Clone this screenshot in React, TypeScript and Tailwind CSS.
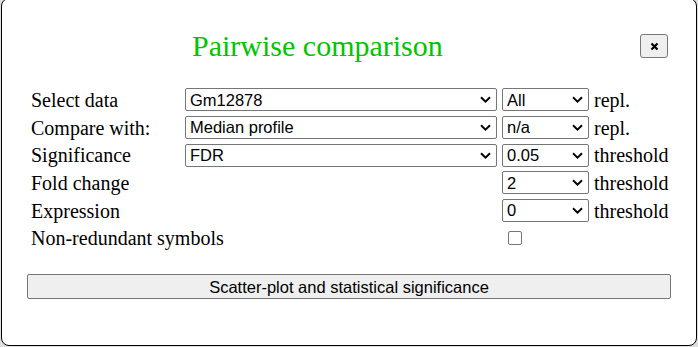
import React from "react";

function Chevron() {
  return (
    <svg width="11" height="7" viewBox="0 0 11 7" className="shrink-0">
      <path d="M1 1.2 L5.5 5.6 L10 1.2" fill="none" stroke="#000" strokeWidth="1.9" />
    </svg>
  );
}

function FakeSelect({ value, wide }: { value: string; wide?: boolean }) {
  return (
    <div
      className={`flex h-[23px] items-center justify-between rounded-[2px] border border-[#767676] bg-white pl-[4px] pr-[5px] text-[16.5px] text-black ${
        wide ? "w-[312px]" : "w-[87px]"
      }`}
      style={{ fontFamily: '"Liberation Sans", Arial, sans-serif' }}
    >
      <span className="leading-none">{value}</span>
      <Chevron />
    </div>
  );
}

const rows = [
  { label: "Select data", main: "Gm12878", small: "All", unit: "repl." },
  { label: "Compare with:", main: "Median profile", small: "n/a", unit: "repl." },
  { label: "Significance", main: "FDR", small: "0.05", unit: "threshold" },
  { label: "Fold change", main: null, small: "2", unit: "threshold" },
  { label: "Expression", main: null, small: "0", unit: "threshold" },
];

export default function App() {
  return (
    <div className="h-[347px] w-[698px] overflow-hidden bg-[#dedede]">
      <div
        className="ml-[1px] mt-[-2px] h-[348px] w-[696px] rounded-[8px] border border-black bg-white px-[25px] pt-[27px]"
        style={{ fontFamily: '"Liberation Serif", "Times New Roman", serif' }}
      >
        {/* header */}
        <div className="flex h-[40px] items-center">
          <h1 className="ml-[165px] text-[30px] leading-none text-[#00c400]">Pairwise comparison</h1>
          <button className="ml-auto mr-[3px] flex h-[24px] w-[28px] items-center justify-center rounded-[3px] border border-[#767676] bg-[#efefef]">
            <svg width="9" height="9" viewBox="0 0 9 9">
              <path d="M1.5 1.5 L7.5 7.5 M7.5 1.5 L1.5 7.5" stroke="#000" strokeWidth="2.2" />
            </svg>
          </button>
        </div>

        {/* form rows */}
        <div className="mt-[20px] grid grid-cols-[149px_312px_87px_auto] auto-rows-[27.7px] items-center gap-x-[5px] pl-[4px] text-[20px] text-black">
          {rows.map((r) => (
            <React.Fragment key={r.label}>
              <div>{r.label}</div>
              <div>{r.main ? <FakeSelect value={r.main} wide /> : null}</div>
              <FakeSelect value={r.small} />
              <div>{r.unit}</div>
            </React.Fragment>
          ))}
          <div className="col-span-2">Non-redundant symbols</div>
          <div className="pl-[6px]">
            <div className="h-[14px] w-[14px] rounded-[2px] border border-[#767676] bg-white" />
          </div>
          <div />
        </div>

        <button
          className="mt-[22px] h-[25px] w-[644px] rounded-[2px] border border-[#767676] bg-[#efefef] text-[16.5px] text-black"
          style={{ fontFamily: '"Liberation Sans", Arial, sans-serif' }}
        >
          Scatter-plot and statistical significance
        </button>
      </div>
    </div>
  );
}
